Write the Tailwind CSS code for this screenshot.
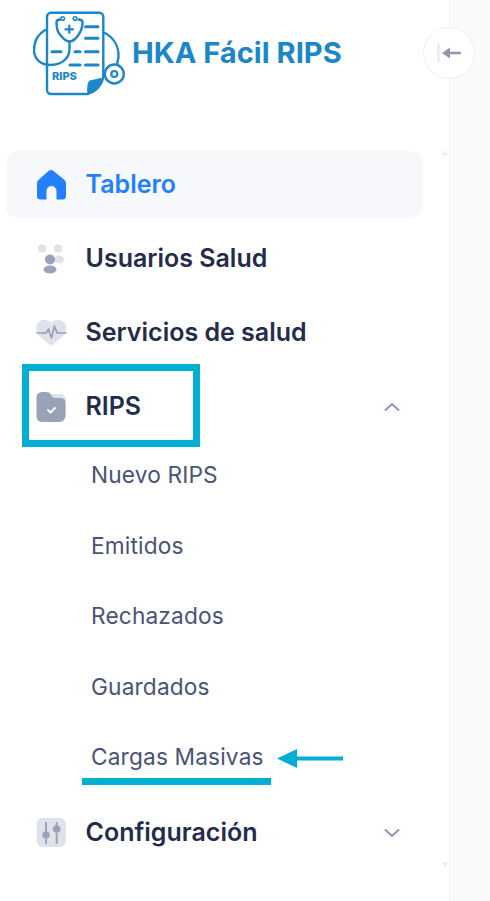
<!doctype html>
<html lang="es">
<head>
<meta charset="utf-8">
<script src="https://cdn.jsdelivr.net/npm/@tailwindcss/browser@4"></script>
<title>HKA Fácil RIPS</title>
</head>
<body class="m-0 bg-white font-['Inter','Liberation_Sans',sans-serif]">
<div class="relative flex h-[901px] w-[490px] overflow-hidden">
  <aside class="relative h-full w-[450px] shrink-0 border-r border-[#f0f0f3] bg-white">
    <header class="flex h-[151px] items-start">
      <div class="ml-[33px] mt-[11px] flex items-start gap-[6px]">
        <svg class="shrink-0" width="93" height="86" viewBox="0 0 93 86" fill="none" stroke="#1b87c9" stroke-linecap="round" stroke-linejoin="round">
          <path d="M70.300 67V6a4 4 0 0 0-4-4.300H18a4 4 0 0 0-4 4.300V79a4 4 0 0 0 4 4h37" stroke-width="2.400"/>
          <path d="M12 19C4 24 1 32 1 39c0 9 7 15 16 15 12 0 19.500-7 19.500-16v-7" stroke-width="2.400"/>
          <path d="M72 22c9 5 14 14 13.500 24l-1.500 8" stroke-width="2.400"/>
          <path d="M27 8.500c-2.500 0-3.500 1-3.500 3 0 5 1 9 3 11.500 3 4 6 7.500 10 7.500s7-3.500 9.500-7.500c2-3 3.500-7 3.500-11.500 0-2-1-3-4-3" stroke-width="2.400"/>
          <circle cx="29.700" cy="7.500" r="1.800" stroke-width="1.500"/><circle cx="42" cy="7.500" r="1.800" stroke-width="1.500"/>
          <path d="M36.300 14.500v7.500M32.500 18.300h7.500" stroke-width="2.200"/>
          <path d="M52.500 15.700h12.500M52.500 27.300h12.500M52.500 40.700h12.500M52.500 54h12.500M19 40.700h9M42 40.700h5M37 54h10" stroke-width="3"/>
          <path d="M55 83c-.5-5 0-11 2-13l13.500-3c-1 7-8 15-15.500 16z" fill="#1b87c9" stroke-width="1.200"/>
          <circle cx="81.300" cy="63" r="9.500" fill="#fff" stroke-width="2.400"/><circle cx="81.300" cy="63" r="3" stroke-width="2.200"/>
          <text x="19" y="69" fill="#1b87c9" stroke="none" font-size="11" font-weight="800" font-family="Inter, sans-serif">RIPS</text>
        </svg>
        <span class="mt-[26px] text-[29.100px] leading-[32px] font-bold text-[#1b87c9]">HKA Fácil RIPS</span>
      </div>
    </header>

    <nav class="px-[6px]">
      <a class="flex h-[67px] w-[417px] items-center gap-[18.500px] rounded-xl bg-[#f6f8fc] pl-[29px] text-[25px] font-[590] text-[#2280ff]">
        <svg class="shrink-0" width="32" height="32" viewBox="0 0 32 32"><path fill="#2280ff" fill-rule="evenodd" d="M13.500 2a4 4 0 0 1 5 0l10.500 8.500a5 5 0 0 1 2 4V27a3.500 3.500 0 0 1-3.500 3.500h-6V22a5 5 0 0 0-10 0v8.500H5.500A3.500 3.500 0 0 1 2 27V14.500a5 5 0 0 1 2-4z"/></svg>
        Tablero
      </a>
      <a class="mt-[7px] flex h-[67px] items-center gap-[18.500px] pl-[29px] text-[25px] font-[590] text-[#232c4b]">
        <svg class="shrink-0" width="32" height="32" viewBox="0 0 32 32"><g fill="#dfe2ea"><circle cx="7" cy="5.500" r="4"/><circle cx="23" cy="5.500" r="4"/><ellipse cx="24" cy="16.500" rx="5" ry="4"/></g><circle cx="15" cy="16.500" r="5" fill="#9aa2b8"/><ellipse cx="15" cy="26.500" rx="6.500" ry="4" fill="#9aa2b8"/></svg>
        Usuarios Salud
      </a>
      <a class="mt-[7px] flex h-[67px] items-center gap-[18.500px] pl-[29px] text-[25px] font-[590] text-[#232c4b]">
        <svg class="shrink-0" width="32" height="32" viewBox="0 0 32 32"><path fill="#dfe2ea" d="M16.300 29 4.500 19C.500 15 0 9.500 3.500 5.500c3.500-3.800 9-3.500 12.800.5 3.800-4 9.300-4.300 12.800-.5 3.500 4 3 9.500-1 13.500z"/><path fill="none" stroke="#9aa2b8" stroke-width="1.700" stroke-linecap="round" stroke-linejoin="round" d="M2 16h9l2.500-4 3 9 3-12 2.500 7h9"/></svg>
        Servicios de salud
      </a>
      <div class="mt-[7px] flex h-[67px] items-center gap-[18.500px] pl-[29px] pr-[43px] text-[25px] font-[590] text-[#232c4b]">
        <svg class="shrink-0" width="32" height="32" viewBox="0 0 32 32"><path fill="#dfe2ea" d="M14 3h11a6 6 0 0 1 6 6v14H20z"/><path fill="#9aa2b8" d="M7 1h4c3 0 4 1 5 3 1 1.800 2 3 4 3h6a4.500 4.500 0 0 1 4.500 4.500V25a6 6 0 0 1-6 6H7a5.500 5.500 0 0 1-5.500-5.500V6.500A5.500 5.500 0 0 1 7 1z"/><path fill="none" stroke="#fff" stroke-width="1.800" stroke-linecap="round" stroke-linejoin="round" d="M13 19l2.500 2.500 4.500-4.500"/></svg>
        <span>RIPS</span>
        <svg class="ml-auto" width="16" height="10" viewBox="0 0 16 10" fill="none" stroke="#8f97b0" stroke-width="2"><path d="M1 8.500 8 2l7 6.500"/></svg>
      </div>
      <ul class="text-[22.700px] leading-[70.500px] font-[440] tracking-[0.15px] text-[#485377]">
        <li class="h-[70.500px] pl-[85px]">Nuevo RIPS</li>
        <li class="h-[70.500px] pl-[85px]">Emitidos</li>
        <li class="h-[70.500px] pl-[85px]">Rechazados</li>
        <li class="h-[70.500px] pl-[85px]">Guardados</li>
        <li class="h-[70.500px] pl-[85px]">Cargas Masivas</li>
      </ul>
      <div class="mt-[7px] flex h-[67px] items-center gap-[18.500px] pl-[29px] pr-[43px] text-[25px] font-[590] text-[#232c4b]">
        <svg class="shrink-0" width="32" height="32" viewBox="0 0 32 32"><rect x="1.700" y="1" width="29" height="29" rx="6" fill="#dfe2ea"/><g stroke="#9aa2b8" stroke-width="2" stroke-linecap="round"><path d="M11 6v8M11 23v3M21.700 6v2M21.700 17v9"/></g><circle cx="11" cy="18" r="3.800" fill="#9aa2b8"/><circle cx="21.700" cy="12" r="3.800" fill="#9aa2b8"/></svg>
        <span>Configuración</span>
        <svg class="ml-auto" width="16" height="10" viewBox="0 0 16 10" fill="none" stroke="#8f97b0" stroke-width="2"><path d="M1 1.500 8 8l7-6.500"/></svg>
      </div>
    </nav>

    <span class="absolute left-[442px] top-[150px] h-0 w-0 border-x-[3px] border-b-[5px] border-x-transparent border-b-[#ececef]"></span>
    <span class="absolute left-[442px] top-[862px] h-0 w-0 border-x-[3px] border-t-[5px] border-x-transparent border-t-[#ececef]"></span>
  </aside>
  <main class="flex-1 bg-[#fafafa]"></main>

  <button class="absolute left-[423px] top-[27px] flex h-[52px] w-[52px] items-center justify-center rounded-full border border-[#f0f0f3] bg-white">
    <svg width="24" height="20" viewBox="0 0 24 20" fill="none" stroke-linecap="round"><path d="M1.500 1v18" stroke="#e2e5ee" stroke-width="2"/><path d="M8 10h15" stroke="#8f97b0" stroke-width="2.400"/><path d="M5 10l8-5.500v11z" fill="#8f97b0"/></svg>
  </button>

  <div class="absolute left-[22px] top-[364px] h-[83px] w-[178px] border-[7px] border-[#00afd1]"></div>
  <div class="absolute left-[82px] top-[778px] h-[7px] w-[189px] bg-[#00afd1]"></div>
  <svg class="absolute left-[277px] top-[748px]" width="67" height="22" viewBox="0 0 67 22"><path d="M0 10.500 20 1v7.500h46v4H20v7.500z" fill="#00afd1"/></svg>
</div>
</body>
</html>
